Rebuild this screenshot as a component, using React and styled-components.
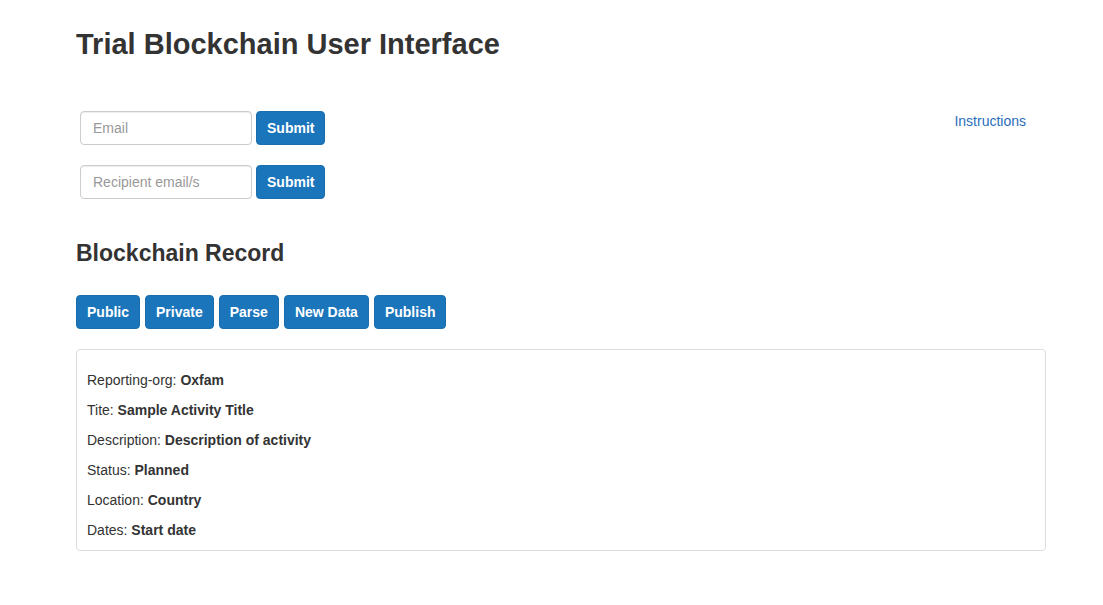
import React, { useState } from 'react';
import styled, { createGlobalStyle } from 'styled-components';

const GlobalStyle = createGlobalStyle`
  body {
    margin: 0;
    background: #fff;
    font-family: "Liberation Sans", Arial, sans-serif;
    font-size: 14px;
    color: #333;
  }
`;

const Page = styled.div`
  width: 970px;
  padding: 28px 0 40px 76px;
`;

const Title = styled.h1`
  margin: 0 0 50px;
  font-size: 29px;
  line-height: 33px;
  font-weight: 700;
  color: #333;
`;

const TopRow = styled.div`
  display: flex;
  justify-content: space-between;
  align-items: flex-start;
`;

const Forms = styled.div`
  display: flex;
  flex-direction: column;
  gap: 20px;
  padding-left: 4px;
`;

const InlineForm = styled.form`
  display: flex;
  gap: 4px;
`;

const Input = styled.input`
  box-sizing: border-box;
  width: 172px;
  height: 34px;
  padding: 6px 12px;
  border: 1px solid #ccc;
  border-radius: 4px;
  font-family: inherit;
  font-size: 14px;
  color: #555;
  box-shadow: inset 0 1px 1px rgba(0, 0, 0, 0.075);
  &::placeholder {
    color: #999;
  }
`;

const Button = styled.button`
  box-sizing: border-box;
  height: 34px;
  padding: 6px 10px;
  border: 1px solid #1a6eae;
  border-radius: 4px;
  background: #1b75bb;
  color: #fff;
  font-family: inherit;
  font-size: 14px;
  font-weight: 700;
  cursor: pointer;
`;

const Link = styled.a`
  margin: 2px 20px 0 0;
  color: #2a6ebb;
  font-size: 14px;
  text-decoration: none;
`;

const Subtitle = styled.h2`
  margin: 41px 0 29px;
  font-size: 23px;
  line-height: 26px;
  font-weight: 700;
  color: #333;
`;

const Toolbar = styled.div`
  display: flex;
  gap: 5px;
  margin-bottom: 20px;
`;

const Panel = styled.div`
  border: 1px solid #ddd;
  border-radius: 4px;
  padding: 20px 10px 0;
`;

const Field = styled.p`
  margin: 0 0 10px;
  line-height: 20px;
  b {
    font-weight: 700;
  }
`;

const fields = [
  ['Reporting-org', 'Oxfam'],
  ['Tite', 'Sample Activity Title'],
  ['Description', 'Description of activity'],
  ['Status', 'Planned'],
  ['Location', 'Country'],
  ['Dates', 'Start date'],
];

const App = () => {
  const [email, setEmail] = useState('');
  const [recipients, setRecipients] = useState('');

  return (
    <>
      <GlobalStyle />
      <Page>
        <Title>Trial Blockchain User Interface</Title>
        <TopRow>
          <Forms>
            <InlineForm onSubmit={(e) => e.preventDefault()}>
              <Input
                type="text"
                placeholder="Email"
                value={email}
                onChange={(e) => setEmail(e.target.value)}
              />
              <Button type="submit">Submit</Button>
            </InlineForm>
            <InlineForm onSubmit={(e) => e.preventDefault()}>
              <Input
                type="text"
                placeholder="Recipient email/s"
                value={recipients}
                onChange={(e) => setRecipients(e.target.value)}
              />
              <Button type="submit">Submit</Button>
            </InlineForm>
          </Forms>
          <Link href="#">Instructions</Link>
        </TopRow>

        <Subtitle>Blockchain Record</Subtitle>
        <Toolbar>
          <Button>Public</Button>
          <Button>Private</Button>
          <Button>Parse</Button>
          <Button>New Data</Button>
          <Button>Publish</Button>
        </Toolbar>

        <Panel>
          {fields.map(([label, value]) => (
            <Field key={label}>
              {label}: <b>{value}</b>
            </Field>
          ))}
        </Panel>
      </Page>
    </>
  );
};

export default App;
